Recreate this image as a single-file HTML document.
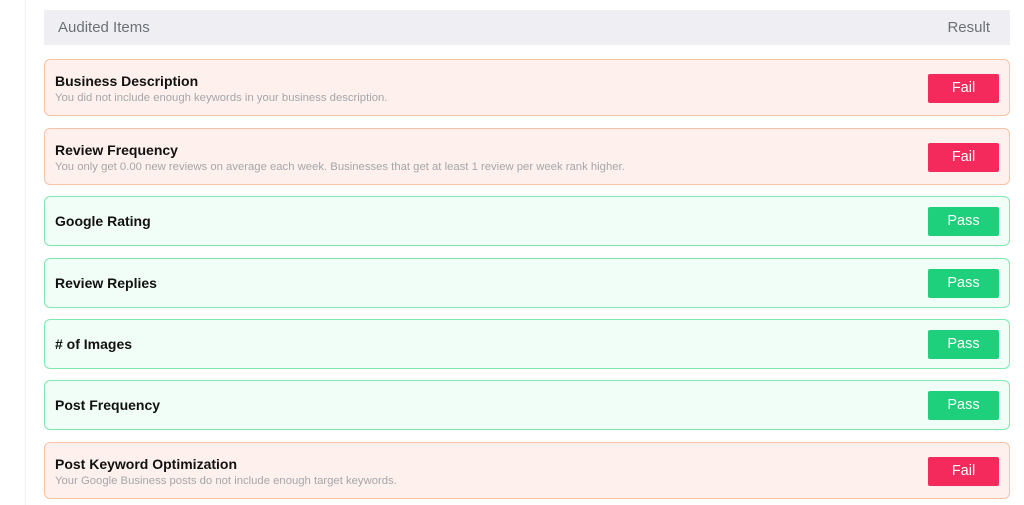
<!DOCTYPE html>
<html><head><style>
*{margin:0;padding:0;box-sizing:border-box}
body{width:1024px;height:505px;background:#fff;font-family:"Liberation Sans",sans-serif;position:relative;overflow:hidden}
.vl{position:absolute;left:25px;top:0;width:1px;height:505px;background:#f0f0f2}
.hd{position:absolute;left:44px;top:10px;width:966px;height:35px;background:#efeff3;color:#6b7177;font-size:15px;line-height:35px;padding:0 14px}
.hd span{float:right;margin-right:6px}
.r{position:absolute;left:44px;width:966px;border-radius:6px;border:1px solid}
.f{background:#fef1ed;border-color:#f8c2a6;height:57px}
.p{background:#f1fdf7;border-color:#7ce9b1;height:50px}
.t{position:absolute;left:10px;font-size:14px;font-weight:bold;color:#111}
.f .t{top:13px}.p .t{top:16px}
.s{position:absolute;left:10px;top:32px;font-size:11.3px;color:#a4a6ab}
.b{position:absolute;right:10px;width:71px;height:29px;border-radius:2px;color:#fff;font-size:14.5px;text-align:center;line-height:29px}
.f .b{top:14px;background:#f42a5d}.p .b{top:10px;background:#1ed07b}
</style></head><body>
<div class="vl"></div>
<div class="hd">Audited Items<span>Result</span></div>
<div class="r f" style="top:59px"><div class="t">Business Description</div><div class="s">You did not include enough keywords in your business description.</div><div class="b">Fail</div></div>
<div class="r f" style="top:128px"><div class="t">Review Frequency</div><div class="s">You only get 0.00 new reviews on average each week. Businesses that get at least 1 review per week rank higher.</div><div class="b">Fail</div></div>
<div class="r p" style="top:196px"><div class="t">Google Rating</div><div class="b">Pass</div></div>
<div class="r p" style="top:258px"><div class="t">Review Replies</div><div class="b">Pass</div></div>
<div class="r p" style="top:319px"><div class="t"># of Images</div><div class="b">Pass</div></div>
<div class="r p" style="top:380px"><div class="t">Post Frequency</div><div class="b">Pass</div></div>
<div class="r f" style="top:442px"><div class="t">Post Keyword Optimization</div><div class="s">Your Google Business posts do not include enough target keywords.</div><div class="b">Fail</div></div>
</body></html>
